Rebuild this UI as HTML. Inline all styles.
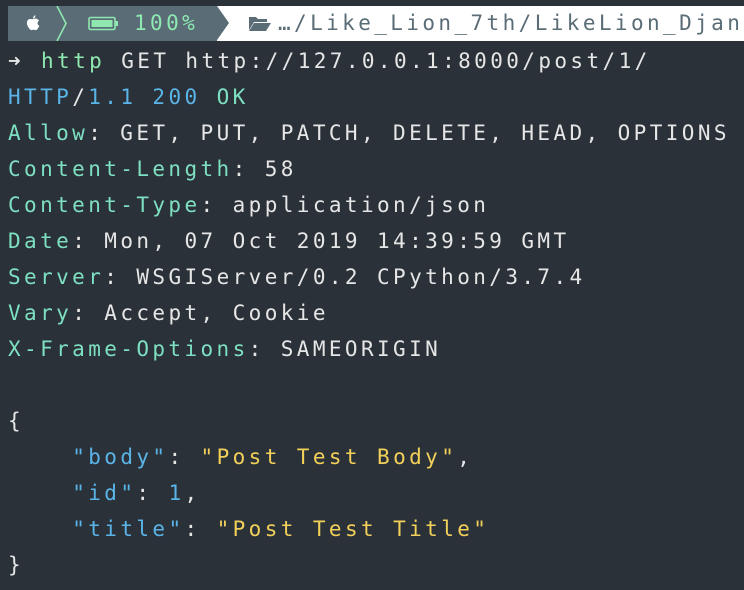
<!DOCTYPE html>
<html><head><meta charset="utf-8"><style>
html,body{margin:0;padding:0;background:#2a3138;width:744px;height:590px;overflow:hidden}
.m{font-family:"DejaVu Sans Mono","Liberation Mono",monospace;font-size:21px;letter-spacing:3.4px;white-space:pre}
#bar{position:absolute;left:8px;top:6px;height:35px;width:736px;background:#fff;overflow:hidden}
#gray{position:absolute;left:0;top:0;height:35px;width:209px;background:#5a6d77}
#arrow{position:absolute;left:209px;top:0;width:0;height:0;border-top:17.5px solid transparent;border-bottom:17.5px solid transparent;border-left:12px solid #5a6d77}
.bt{position:absolute;top:0;line-height:35px}
pre{position:absolute;left:8px;top:43px;margin:0;line-height:36px;color:#e6e6e6}
.k{color:#7ee0c2}.b{color:#5ab4e8}.y{color:#f2d05a}.g{color:#8ee8b0}
</style></head><body>
<div id="bar">
 <div id="gray"></div><div id="arrow"></div>
 <svg style="position:absolute;left:16px;top:8px" width="18" height="19" viewBox="0 0 18 19"><path d="M9 5c1-0 2.5-1 4 0 1 .5 1.5 1 2 1.7-2 1.2-2 4 .3 5-.5 1.5-1.5 3-2.5 4-1 .8-2 .1-3.3.1s-2 .7-3 0C4.500 14 2.500 11 3 8c.3-2 1.800-3 3.300-3 1 0 2 .5 2.700 0z M9 4.5c0-1.500 1-3 2.500-3.200 0 1.600-1 3-2.500 3.200z" fill="#fff"/></svg>
 <svg style="position:absolute;left:47px;top:0" width="14" height="35"><path d="M2 0 L11 17.5 L2 35" stroke="#8ee8b0" stroke-width="1.6" fill="none"/></svg>
 <svg style="position:absolute;left:80px;top:10px" width="31" height="15"><rect x="1" y="1.5" width="26" height="12" rx="1.5" stroke="#8ee8b0" stroke-width="1.6" fill="none"/><rect x="3.5" y="4" width="21" height="7" fill="#8ee8b0"/><rect x="27.5" y="5" width="2.5" height="5" fill="#8ee8b0"/></svg>
 <div class="m bt g" style="left:126px">100%</div>
 <svg style="position:absolute;left:240px;top:8px" width="24" height="19"><path d="M1 3 h7 l2 2 h9 v3 H6 L1 16z M6 9 h17 l-5 8 H1z" fill="#5a6d77"/></svg>
 <div class="m bt" style="left:270px;color:#5a6d77">…/Like_Lion_7th/LikeLion_Django</div>
</div>
<pre class="m"><span style="display:inline-block;width:33px;letter-spacing:0">➜</span><span class="g">http</span> GET http://127.0.0.1:8000/post/1/
<span class="b">HTTP</span>/<span class="b">1.1 200</span> <span class="k">OK</span>
<span class="k">Allow</span>: GET, PUT, PATCH, DELETE, HEAD, OPTIONS
<span class="k">Content-Length</span>: 58
<span class="k">Content-Type</span>: application/json
<span class="k">Date</span>: Mon, 07 Oct 2019 14:39:59 GMT
<span class="k">Server</span>: WSGIServer/0.2 CPython/3.7.4
<span class="k">Vary</span>: Accept, Cookie
<span class="k">X-Frame-Options</span>: SAMEORIGIN

{
    <span class="b">"body"</span>: <span class="y">"Post Test Body"</span>,
    <span class="b">"id"</span>: <span class="b">1</span>,
    <span class="b">"title"</span>: <span class="y">"Post Test Title"</span>
}</pre>
</body></html>
